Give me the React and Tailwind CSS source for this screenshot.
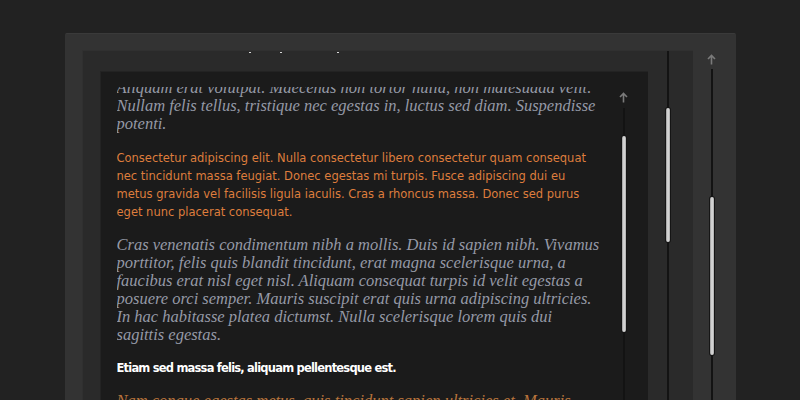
import React from 'react';

const serif = { fontFamily: '"Liberation Serif", serif' };
const sans = { fontFamily: '"DejaVu Sans", sans-serif' };

const Arrow = () => (
  <svg width="9" height="11" viewBox="0 0 9 11" className="block">
    <path d="M4.5 1.5 V10.5 M1 5 L4.5 1.5 L8 5" stroke="#7a7a7a" strokeWidth="1.6" fill="none" />
  </svg>
);

// thin scroll track with a light pill thumb
const Track = ({ thumbTop, thumbHeight }) => (
  <div className="relative w-[4px] flex-1 flex justify-center">
    <div className="w-[2px] h-full bg-[#131313]" />
    <div
      className="absolute left-0 w-[4px] rounded-full bg-gradient-to-r from-[#9a9a9a] via-[#e2e2e2] to-[#a8a8a8] ring-1 ring-[#151515]"
      style={{ top: thumbTop, height: thumbHeight }}
    />
  </div>
);

const lines = (arr) => arr.map((l, i) => (
  <React.Fragment key={i}>
    {l}
    {i < arr.length - 1 && <br />}
  </React.Fragment>
));

const App = () => {
  return (
    <div className="h-[400px] overflow-hidden bg-[#222222] pt-[33px]">
      <div className="mx-auto w-[671px] h-[380px] bg-[#333333] border-t border-[#3a3a3a] rounded-t-[2px] flex pl-[17px] pt-[16px]">
        {/* inner panel */}
        <div className="w-[611px] bg-[#2a2a2a] border-t border-l border-[#303030] flex">
          <div className="w-[566px] overflow-hidden flex flex-col">
            <div className="flex h-[2px] items-end">
              <span className="ml-[166px] w-[2px] h-[1px] bg-[#d8d8d8]" />
              <span className="ml-[29px] w-[2px] h-[1px] bg-[#d8d8d8]" />
              <span className="ml-[55px] w-[2px] h-[1px] bg-[#d8d8d8]" />
            </div>
            {/* nested box */}
            <div className="ml-[17px] mt-[18px] flex-1 bg-[#1b1b1b] flex border-t border-l border-[#232323]">
              <div className="w-[519px] pl-[16px] pt-[15px] flex flex-col">
                <div className="flex-1 overflow-hidden">
                  <div className="-mt-[8px] whitespace-nowrap leading-[18px]">
                    <p className="italic text-[16.5px] text-[#9599a6]" style={serif}>
                      {lines([
                        'Aliquam erat volutpat. Maecenas non tortor nulla, non malesuada velit.',
                        'Nullam felis tellus, tristique nec egestas in, luctus sed diam. Suspendisse',
                        'potenti.',
                      ])}
                    </p>
                    <p className="mt-[16px] text-[11.5px] text-[#de7d3d]" style={sans}>
                      {lines([
                        'Consectetur adipiscing elit. Nulla consectetur libero consectetur quam consequat',
                        'nec tincidunt massa feugiat. Donec egestas mi turpis. Fusce adipiscing dui eu',
                        'metus gravida vel facilisis ligula iaculis. Cras a rhoncus massa. Donec sed purus',
                        'eget nunc placerat consequat.',
                      ])}
                    </p>
                    <p className="mt-[15px] italic text-[16.5px] text-[#9599a6]" style={serif}>
                      {lines([
                        'Cras venenatis condimentum nibh a mollis. Duis id sapien nibh. Vivamus',
                        'porttitor, felis quis blandit tincidunt, erat magna scelerisque urna, a',
                        'faucibus erat nisl eget nisl. Aliquam consequat turpis id velit egestas a',
                        'posuere orci semper. Mauris suscipit erat quis urna adipiscing ultricies.',
                        'In hac habitasse platea dictumst. Nulla scelerisque lorem quis dui',
                        'sagittis egestas.',
                      ])}
                    </p>
                    <p className="mt-[15px] text-[11.5px] font-bold tracking-[-0.8px] text-white" style={sans}>
                      Etiam sed massa felis, aliquam pellentesque est.
                    </p>
                    <p className="mt-[15px] italic text-[16.5px] text-[#b8743c]" style={serif}>
                      Nam congue egestas metus, quis tincidunt sapien ultricies et. Mauris
                    </p>
                  </div>
                </div>
              </div>
              {/* nested scrollbar */}
              <div className="w-[8px] flex flex-col items-center pt-[20px]">
                <Arrow />
                <div className="h-[5px]" />
                <Track thumbTop={28} thumbHeight={196} />
              </div>
            </div>
          </div>
          {/* middle scrollbar */}
          <div className="w-[45px] flex flex-col items-center pr-[5px]">
            <Track thumbTop={57} thumbHeight={134} />
          </div>
        </div>
        {/* outer scrollbar */}
        <div className="w-[43px] flex flex-col items-center pt-[4px] pr-[5px]">
          <Arrow />
          <div className="h-[4px]" />
          <Track thumbTop={128} thumbHeight={158} />
        </div>
      </div>
    </div>
  );
};

export default App;
